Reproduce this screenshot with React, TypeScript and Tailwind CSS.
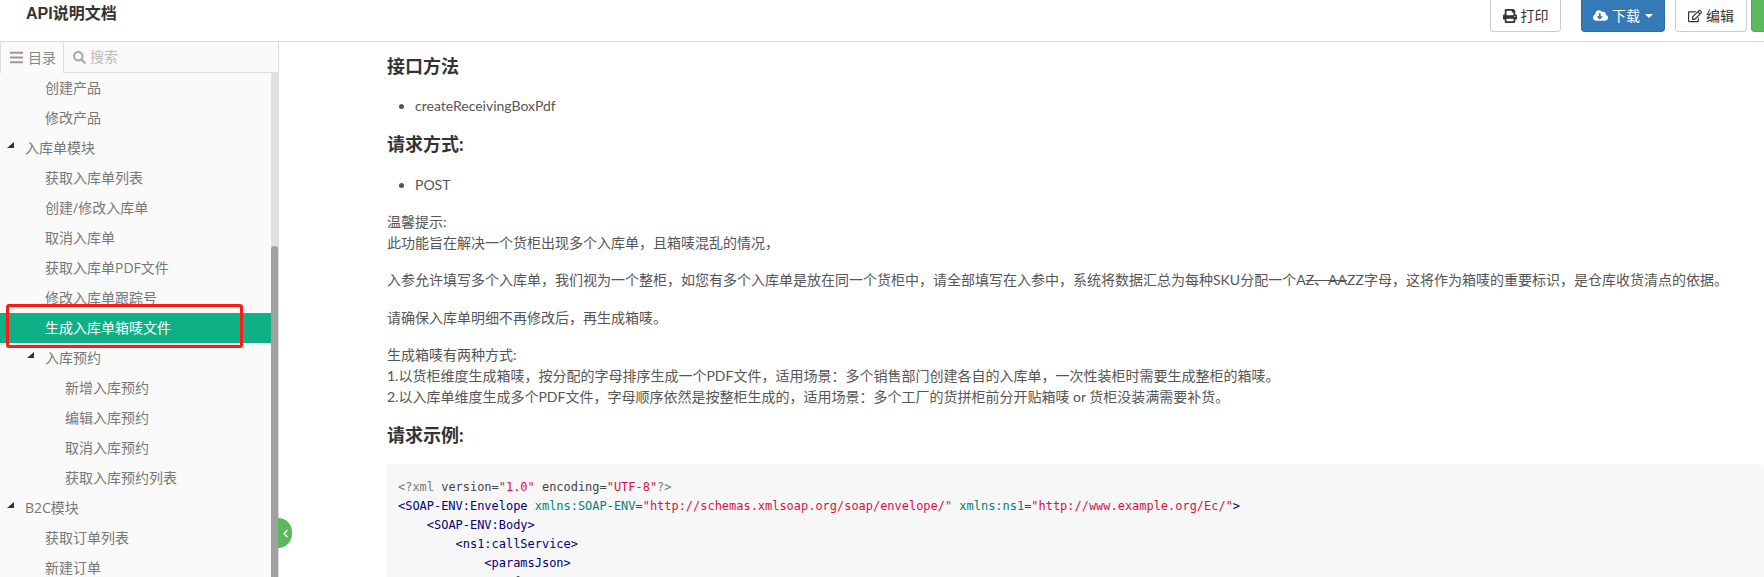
import React from "react";
import { FaBars, FaSearch, FaPrint, FaCloudDownloadAlt, FaRegEdit, FaChevronLeft } from "react-icons/fa";

const tree = [
  { name: "创建产品", level: 2 },
  { name: "修改产品", level: 2 },
  { name: "入库单模块", level: 1, open: true },
  { name: "获取入库单列表", level: 2 },
  { name: "创建/修改入库单", level: 2 },
  { name: "取消入库单", level: 2 },
  { name: "获取入库单PDF文件", level: 2 },
  { name: "修改入库单跟踪号", level: 2 },
  { name: "生成入库单箱唛文件", level: 2, active: true },
  { name: "入库预约", level: 2, open: true },
  { name: "新增入库预约", level: 3 },
  { name: "编辑入库预约", level: 3 },
  { name: "取消入库预约", level: 3 },
  { name: "获取入库预约列表", level: 3 },
  { name: "B2C模块", level: 1, open: true },
  { name: "获取订单列表", level: 2 },
  { name: "新建订单", level: 2 },
];

function Tri() {
  return (
    <svg width="7" height="6" viewBox="0 0 7 6" className="absolute left-[-18px] top-[4px]">
      <path d="M7 0V6H0z" fill="#333" />
    </svg>
  );
}

function TreeRow({ item }: { item: (typeof tree)[number] }) {
  const pad = item.level === 1 ? "pl-[25px]" : item.level === 2 ? "pl-[45px]" : "pl-[65px]";
  return (
    <div
      className={`h-[30px] leading-[30px] text-sm shrink-0 ${pad} ${
        item.active ? "bg-[#10b087] text-white" : "text-[#777]"
      }`}
    >
      <span className="relative">
        {item.open && <Tri />}
        {item.name}
      </span>
    </div>
  );
}

function Sidebar() {
  return (
    <aside className="relative w-[279px] shrink-0 bg-[#fafafa] flex flex-col border-r border-[#ddd] font-['Open_Sans','Noto_Sans_CJK_SC',sans-serif]">
      <div className="h-[31px] shrink-0 flex border-b border-[#ddd] text-sm">
        <div className="w-[64px] flex items-center gap-[4px] pl-[8px] text-[#888] bg-[#fafafa] border-r border-[#ddd] h-[31px] border-l">
          <FaBars className="text-[15px] text-[#999]" />
          <span>目录</span>
        </div>
        <div className="flex items-center gap-[4px] pl-[9px] text-[#bbb]">
          <FaSearch className="text-[13px] text-[#aaa]" />
          <span>搜索</span>
        </div>
      </div>
      <div className="flex flex-1 overflow-hidden">
        <div className="flex-1 flex flex-col overflow-hidden">
          {tree.map((t) => (
            <TreeRow key={t.name} item={t} />
          ))}
        </div>
        <div className="w-[7px] bg-[#e0e0e0] pt-[173px]">
          <div className="h-full bg-[#a1a1a1] rounded-t-[3px]" />
        </div>
      </div>
      {/* annotation box drawn over the screenshot */}
      <div className="absolute left-[6px] top-[262px] w-[237px] h-[44px] border-[3px] border-[#ff1a12] rounded-[3px]" />
      <div className="absolute left-[278px] top-[476px] w-[14px] h-[30px] bg-[#5cb85c] rounded-r-[15px] flex items-center justify-center text-white">
        <FaChevronLeft className="text-[9px]" />
      </div>
    </aside>
  );
}

function Btn({ children, className }: { children: React.ReactNode; className: string }) {
  return (
    <div
      className={`h-[32px] flex items-center justify-center gap-[4px] border rounded-b-[4px] border-t-0 text-sm ${className}`}
    >
      {children}
    </div>
  );
}

function Header() {
  return (
    <header className="h-[42px] shrink-0 border-b border-[#ddd] bg-white flex justify-between">
      <h1 className="pl-[26px] text-base leading-[27px] font-bold text-[#333]">API说明文档</h1>
      <div className="flex items-start">
        <Btn className="w-[71px] border-[#ccc] text-[#333] bg-white mr-[20px]">
          <FaPrint className="text-[14px]" />
          打印
        </Btn>
        <Btn className="w-[84px] border-[#2e6da4] bg-[#337ab7] text-white mr-[10px]">
          <FaCloudDownloadAlt className="text-[15px]" />
          下载
          <span className="border-x-4 border-t-4 border-x-transparent border-t-white ml-[1px]" />
        </Btn>
        <Btn className="w-[72px] border-[#ccc] text-[#333] bg-white mr-[4px]">
          <FaRegEdit className="text-[14px]" />
          编辑
        </Btn>
        <Btn className="w-[13px] border-[#4cae4c] bg-[#5cb85c] rounded-br-none border-r-0">
          <span />
        </Btn>
      </div>
    </header>
  );
}

function Code() {
  const tag = "text-[#000080]";
  const attr = "text-[#008080]";
  const str = "text-[#dd1144]";
  return (
    <pre className="mt-[16px] bg-[#f7f7f7] rounded-[3px] pt-[14px] pl-[11px] font-['DejaVu_Sans_Mono','Liberation_Mono',monospace] text-[11.96px] leading-[19px] text-[#444]">
      <span className="text-[#777]">{'<?xml '}</span>
      <span>version=</span>
      <span className={str}>"1.0"</span>
      <span> encoding=</span>
      <span className={str}>"UTF-8"</span>
      <span className="text-[#777]">{"?>"}</span>
      {"\n"}
      <span className={tag}>{"<SOAP-ENV:Envelope "}</span>
      <span className={attr}>xmlns:SOAP-ENV</span>
      <span>=</span>
      <span className={str}>"http://schemas.xmlsoap.org/soap/envelope/"</span>
      <span> </span>
      <span className={attr}>xmlns:ns1</span>
      <span>=</span>
      <span className={str}>"http://www.example.org/Ec/"</span>
      <span className={tag}>{">"}</span>
      {"\n    "}
      <span className={tag}>{"<SOAP-ENV:Body>"}</span>
      {"\n        "}
      <span className={tag}>{"<ns1:callService>"}</span>
      {"\n            "}
      <span className={tag}>{"<paramsJson>"}</span>
      {"\n                {"}
    </pre>
  );
}

function Content() {
  return (
    <main className="flex-1 overflow-hidden pl-[108px] text-sm leading-[21px] text-[#555] font-['Lato','Noto_Sans_CJK_SC',sans-serif]">
      <h3 className="mt-[12px] text-lg leading-[25px] font-bold text-[#333]">接口方法</h3>
      <ul className="mt-[16px] list-disc pl-[28px]">
        <li>createReceivingBoxPdf</li>
      </ul>
      <h3 className="mt-[16px] text-lg leading-[25px] font-bold text-[#333]">请求方式:</h3>
      <ul className="mt-[17px] list-disc pl-[28px]">
        <li>POST</li>
      </ul>
      <p className="mt-[16px]">
        温馨提示:
        <br />
        此功能旨在解决一个货柜出现多个入库单，且箱唛混乱的情况，
      </p>
      <p className="mt-[16px] whitespace-nowrap">
        入参允许填写多个入库单，我们视为一个整柜，如您有多个入库单是放在同一个货柜中，请全部填写在入参中，系统将数据汇总为每种SKU分配一个A
        <del>Z、AA</del>
        ZZ字母，这将作为箱唛的重要标识，是仓库收货清点的依据。
      </p>
      <p className="mt-[17px]">请确保入库单明细不再修改后，再生成箱唛。</p>
      <p className="mt-[16px] whitespace-nowrap">
        生成箱唛有两种方式:
        <br />
        1.以货柜维度生成箱唛，按分配的字母排序生成一个PDF文件，适用场景：多个销售部门创建各自的入库单，一次性装柜时需要生成整柜的箱唛。
        <br />
        2.以入库单维度生成多个PDF文件，字母顺序依然是按整柜生成的，适用场景：多个工厂的货拼柜前分开贴箱唛 or 货柜没装满需要补货。
      </p>
      <h3 className="mt-[16px] text-lg leading-[25px] font-bold text-[#333]">请求示例:</h3>
      <Code />
    </main>
  );
}

export default function App() {
  return (
    <div className="h-[577px] w-[1764px] overflow-hidden flex flex-col bg-white font-['Liberation_Sans','Noto_Sans_CJK_SC',sans-serif]">
      <Header />
      <div className="flex flex-1 overflow-hidden">
        <Sidebar />
        <Content />
      </div>
    </div>
  );
}
